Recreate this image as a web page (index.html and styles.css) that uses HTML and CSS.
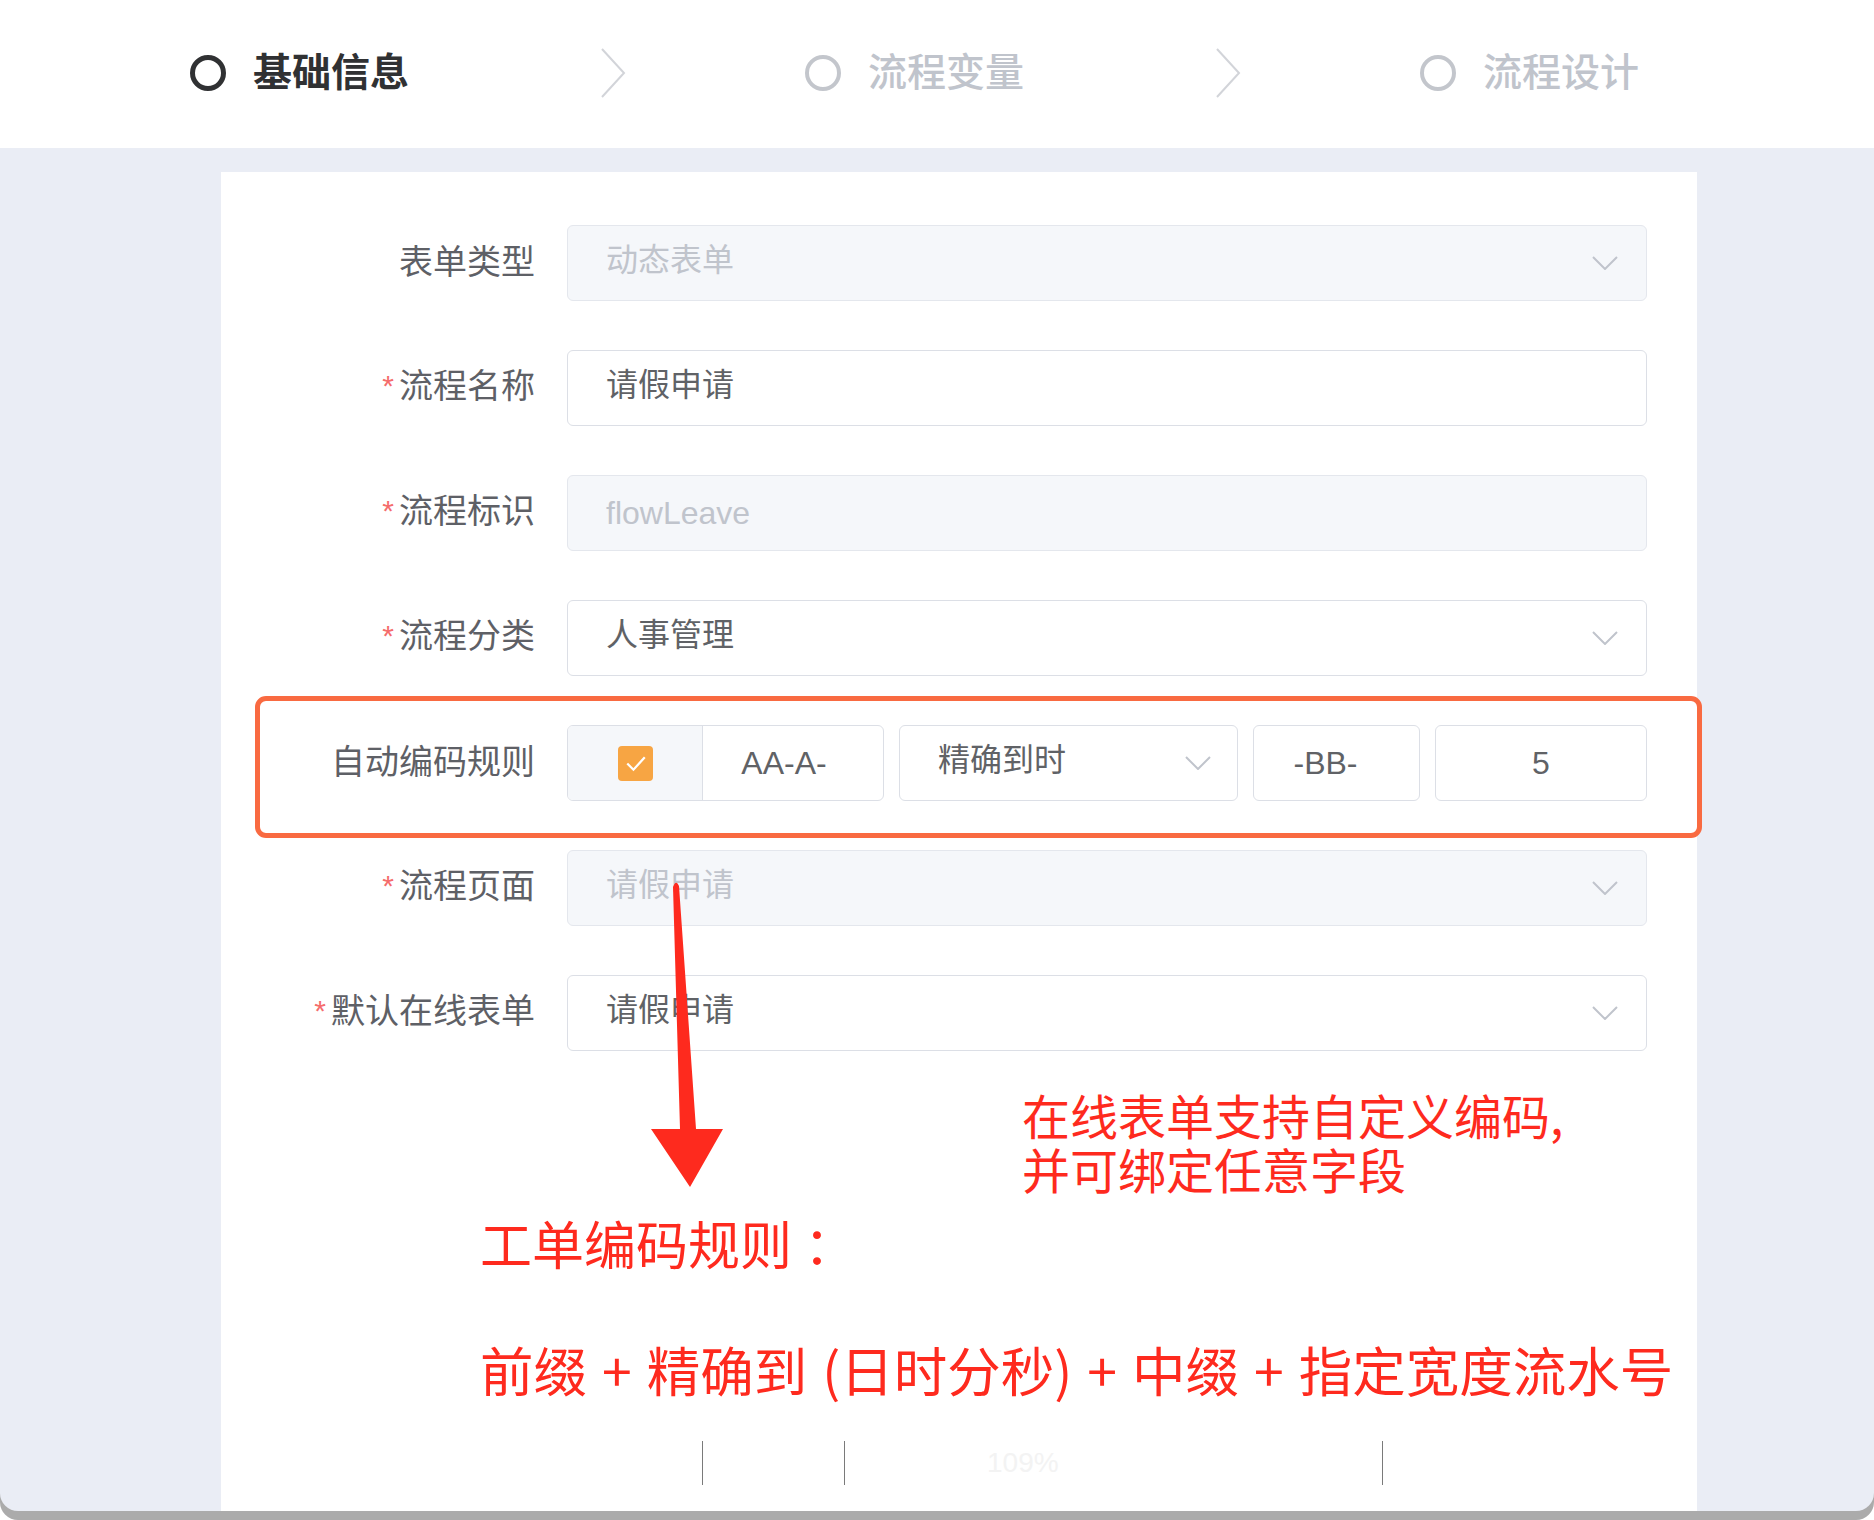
FILE: index.html
```html
<!DOCTYPE html>
<html lang="zh-CN">
<head>
<meta charset="utf-8">
<title>流程设置</title>
<link rel="stylesheet" href="styles.css">
</head>
<body>
<div class="window">
  <header class="steps">
    <div class="step active">
      <svg class="step-icon" viewBox="0 0 36 36"><circle cx="18" cy="18" r="15.5"/></svg>
      <span class="step-title">基础信息</span>
    </div>
    <svg class="step-arrow" viewBox="0 0 26 50"><polyline points="2,1 24,25 2,49"/></svg>
    <div class="step">
      <svg class="step-icon" viewBox="0 0 36 36"><circle cx="18" cy="18" r="16"/></svg>
      <span class="step-title">流程变量</span>
    </div>
    <svg class="step-arrow" viewBox="0 0 26 50"><polyline points="2,1 24,25 2,49"/></svg>
    <div class="step">
      <svg class="step-icon" viewBox="0 0 36 36"><circle cx="18" cy="18" r="16"/></svg>
      <span class="step-title">流程设计</span>
    </div>
  </header>

  <main class="main">
    <section class="card">
      <form class="form">
        <div class="row">
          <label class="label">表单类型</label>
          <div class="control input is-disabled">
            <span class="value">动态表单</span>
            <svg class="caret" viewBox="0 0 26 14"><polyline points="1,1 13,13 25,1"/></svg>
          </div>
        </div>
        <div class="row">
          <label class="label"><span class="req">*</span>流程名称</label>
          <div class="control input">
            <span class="value">请假申请</span>
          </div>
        </div>
        <div class="row">
          <label class="label"><span class="req">*</span>流程标识</label>
          <div class="control input is-disabled">
            <span class="value latin">flowLeave</span>
          </div>
        </div>
        <div class="row">
          <label class="label"><span class="req">*</span>流程分类</label>
          <div class="control input">
            <span class="value">人事管理</span>
            <svg class="caret" viewBox="0 0 26 14"><polyline points="1,1 13,13 25,1"/></svg>
          </div>
        </div>
        <div class="row">
          <label class="label">自动编码规则</label>
          <div class="control code-rule">
            <div class="group">
              <div class="group-prepend">
                <span class="checkbox"><svg viewBox="0 0 34 34"><polyline points="9,17 15,23 26,11"/></svg></span>
              </div>
              <div class="group-input">AA-A-</div>
            </div>
            <div class="input precision">
              <span class="value">精确到时</span>
              <svg class="caret" viewBox="0 0 26 14"><polyline points="1,1 13,13 25,1"/></svg>
            </div>
            <div class="input small center">-BB-</div>
            <div class="input width center">5</div>
          </div>
        </div>
        <div class="row">
          <label class="label"><span class="req">*</span>流程页面</label>
          <div class="control input is-disabled">
            <span class="value">请假申请</span>
            <svg class="caret" viewBox="0 0 26 14"><polyline points="1,1 13,13 25,1"/></svg>
          </div>
        </div>
        <div class="row">
          <label class="label"><span class="req">*</span>默认在线表单</label>
          <div class="control input">
            <span class="value">请假申请</span>
            <svg class="caret" viewBox="0 0 26 14"><polyline points="1,1 13,13 25,1"/></svg>
          </div>
        </div>
      </form>

      <p class="note">在线表单支持自定义编码,<br>并可绑定任意字段</p>
      <p class="rule-title">工单编码规则<span class="colon">：</span></p>
      <p class="rule">前缀 + 精确到 (日时分秒) + 中缀 + 指定宽度流水号</p>

      <div class="ruler">
        <span class="tick"></span>
        <span class="ruler-gap"></span>
        <span class="tick"></span>
        <span class="ruler-label">109%</span>
        <span class="tick"></span>
      </div>

      <div class="callout"></div>
      <svg class="arrow" viewBox="0 0 90 320"><path d="M32,10 Q35,2 38,9 L55,252 L82,252 L49,310 L10,252 L39,252 Z"/></svg>
    </section>
  </main>
</div>
</body>
</html>
```

FILE: styles.css
```css
* { box-sizing: border-box; }

html, body {
  margin: 0;
  padding: 0;
  background: #ffffff;
}

body {
  width: 1874px;
  height: 1520px;
  overflow: hidden;
  font-family: "Noto Sans CJK SC", sans-serif;
}

.window {
  height: 1511px;
  display: flex;
  flex-direction: column;
  background: #eaedf5;
  border-radius: 0 0 18px 18px;
  box-shadow: 0 9px 0 #ababab;
  overflow: hidden;
}

/* ---------- steps ---------- */
.steps {
  flex: 0 0 148px;
  display: flex;
  align-items: center;
  padding: 0 0 2px 190px;
  background: #ffffff;
}

.step {
  display: flex;
  align-items: center;
  gap: 27px;
}

.step-icon {
  width: 36px;
  height: 36px;
  fill: none;
  stroke: #c3c6cc;
  stroke-width: 4;
}

.step-title {
  font-size: 39px;
  line-height: 1;
  padding-bottom: 7px;
  color: #c0c4cc;
  font-weight: 500;
  width: 157px;
  white-space: nowrap;
}

.step.active .step-icon {
  stroke: #303133;
  stroke-width: 5;
}

.step.active .step-title {
  color: #303133;
  font-weight: 700;
}

.step-arrow {
  width: 26px;
  height: 50px;
  margin: 0 179px 0 190px;
  fill: none;
  stroke: #d2d4d9;
  stroke-width: 2;
}

/* ---------- main ---------- */
.main {
  flex: 1;
  padding: 24px 0 0 221px;
  overflow: hidden;
}

.card {
  position: relative;
  width: 1476px;
  height: 100%;
  background: #ffffff;
  padding: 53px 50px 0 0;
}

.form {
  display: flex;
  flex-direction: column;
  gap: 49px;
}

.row {
  display: flex;
  align-items: center;
  height: 76px;
}

.label {
  flex: 0 0 346px;
  padding: 0 32px 7px 0;
  text-align: right;
  font-size: 34px;
  line-height: 1;
  color: #5e6066;
}

.req {
  color: #f56c6c;
  margin-right: 5px;
  font-family: "Liberation Sans", sans-serif;
  font-size: 30px;
  position: relative;
  top: -2px;
}

.control {
  flex: 0 0 1080px;
  height: 76px;
}

.input {
  display: flex;
  align-items: center;
  height: 76px;
  padding: 0 28px 0 38px;
  border: 1px solid #dcdfe6;
  border-radius: 6px;
  background: #ffffff;
  font-family: "Liberation Sans", "Noto Sans CJK SC", sans-serif;
  font-size: 32px;
  color: #606266;
}

.input.is-disabled {
  background: #f5f7fa;
  border-color: #e4e7ed;
  color: #c0c4cc;
}

.value {
  flex: 1;
  line-height: 1;
  padding-bottom: 6px;
  white-space: nowrap;
}

.value.latin {
  padding-bottom: 0;
}

.caret {
  width: 26px;
  height: 14px;
  fill: none;
  stroke: #c0c4cc;
  stroke-width: 2;
}

/* ---------- code rule row ---------- */
.code-rule {
  display: flex;
  gap: 15px;
}

.group {
  flex: 0 0 317px;
  display: flex;
  border: 1px solid #dcdfe6;
  border-radius: 6px;
  overflow: hidden;
}

.group-prepend {
  flex: 0 0 135px;
  display: flex;
  align-items: center;
  justify-content: center;
  background: #f5f7fa;
  border-right: 1px solid #dcdfe6;
}

.checkbox {
  display: flex;
  width: 35px;
  height: 35px;
  border-radius: 4px;
  background: #f7a543;
}

.checkbox svg {
  width: 35px;
  height: 35px;
  fill: none;
  stroke: #ffffff;
  stroke-width: 2.2;
}

.group-input {
  flex: 1;
  display: flex;
  align-items: center;
  justify-content: center;
  padding-right: 18px;
  font-family: "Liberation Sans", sans-serif;
  font-size: 32px;
  color: #606266;
}

.precision {
  flex: 0 0 339px;
  padding-right: 26px;
}

.input.center {
  justify-content: center;
  padding: 0;
}

.input.small {
  flex: 0 0 167px;
  padding-right: 22px;
}

.input.width {
  flex: 0 0 212px;
}

/* ---------- annotations ---------- */
.note,
.rule-title,
.rule {
  margin: 0;
  color: #fe2a1e;
  font-weight: 400;
  white-space: nowrap;
}

.note {
  margin: 36px 0 0 801px;
  font-size: 48px;
  line-height: 54px;
}

.rule-title {
  margin: 18px 0 0 259px;
  font-size: 52px;
  line-height: 60px;
}

.colon {
  display: inline-block;
  margin-left: 12px;
}

.rule {
  margin: 66px 0 0 259px;
  font-size: 53.5px;
  line-height: 60px;
  word-spacing: 3px;
}

.ruler {
  display: flex;
  height: 44px;
  margin: 42px 0 0 481px;
}

.tick {
  flex: 0 0 1px;
  background: #7a7a7a;
}

.ruler-gap {
  flex: 0 0 141px;
}

.ruler-label {
  flex: 0 0 537px;
  padding: 6px 0 0 142px;
  font-family: "Liberation Sans", sans-serif;
  font-size: 28px;
  color: #f3f3f3;
}

.callout {
  position: absolute;
  left: 34px;
  top: 524px;
  width: 1447px;
  height: 142px;
  border: 5px solid #f96a41;
  border-radius: 11px;
}

.arrow {
  position: absolute;
  left: 420px;
  top: 705px;
  width: 90px;
  height: 320px;
  fill: #fe2a1e;
}
```
